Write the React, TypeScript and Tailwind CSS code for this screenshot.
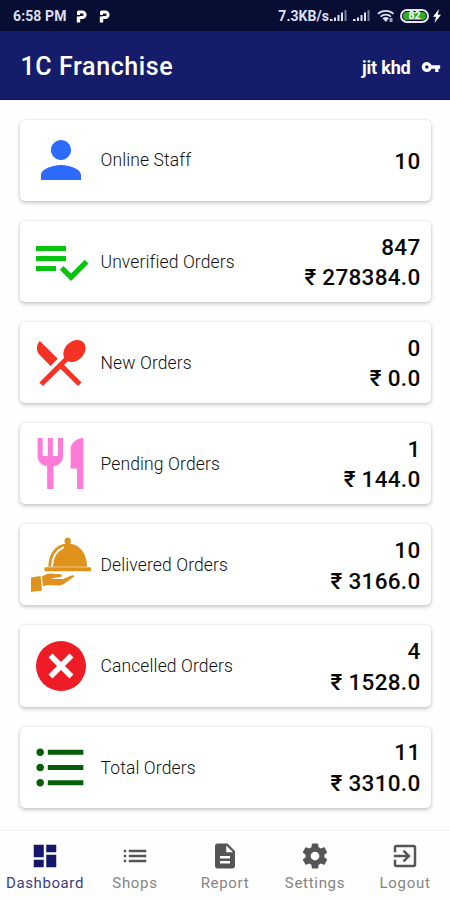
import React from "react";

const PATHS = {
  person: "M12 12c2.21 0 4-1.79 4-4s-1.79-4-4-4-4 1.79-4 4 1.79 4 4 4zm0 2c-2.67 0-8 1.34-8 4v2h16v-2c0-2.66-5.33-4-8-4z",
  check: "M14 10H2v2h12v-2zm0-4H2v2h12V6zM2 16h8v-2H2v2zm19.5-4.5L23 13l-6.99 7-4.51-4.5L13 14l3.01 3 5.49-5.5z",
  menu: "M8.1 13.34l2.83-2.83L3.91 3.5c-1.56 1.56-1.56 4.09 0 5.66l4.19 4.18zm6.78-1.81c1.53.71 3.68.21 5.27-1.38 1.91-1.91 2.28-4.65.81-6.12-1.46-1.46-4.2-1.1-6.12.81-1.59 1.59-2.09 3.74-1.38 5.27L3.7 19.87l1.41 1.41L12 14.41l6.88 6.88 1.41-1.41L13.41 13l1.47-1.47z",
  restaurant: "M11 9H9V2H7v7H5V2H3v7c0 2.12 1.66 3.84 3.75 3.97V22h2.5v-9.03C11.34 12.84 13 11.12 13 9V2h-2v7zm5-3v8h2.5v8H21V2c-2.76 0-5 2.24-5 4z",
  bullets: "M4 10.5c-.83 0-1.5.67-1.5 1.5s.67 1.5 1.5 1.5 1.5-.67 1.5-1.5-.67-1.5-1.5-1.5zm0-6c-.83 0-1.5.67-1.5 1.5S3.17 7.5 4 7.5 5.5 6.83 5.5 6 4.83 4.5 4 4.5zm0 12c-.83 0-1.5.68-1.5 1.5s.68 1.5 1.5 1.5 1.5-.68 1.5-1.5-.67-1.5-1.5-1.5zM7 19h14v-2H7v2zm0-6h14v-2H7v2zm0-8v2h14V5H7z",
  dashboard: "M3 13h8V3H3v10zm0 8h8v-6H3v6zm10 0h8V11h-8v10zm0-18v6h8V3h-8z",
  list: "M3 13h2v-2H3v2zm0 4h2v-2H3v2zm0-8h2V7H3v2zm4 4h14v-2H7v2zm0 4h14v-2H7v2zM7 7v2h14V7H7z",
  report: "M14 2H6c-1.1 0-1.99.9-1.99 2L4 20c0 1.1.89 2 1.99 2H18c1.1 0 2-.9 2-2V8l-6-6zm2 16H8v-2h8v2zm0-4H8v-2h8v2zm-3-5V3.5L18.5 9H13z",
  settings: "M19.43 12.98c.04-.32.07-.64.07-.98s-.03-.66-.07-.98l2.11-1.65c.19-.15.24-.42.12-.64l-2-3.46c-.12-.22-.39-.3-.61-.22l-2.49 1c-.52-.4-1.08-.73-1.69-.98l-.38-2.65C14.46 2.18 14.25 2 14 2h-4c-.25 0-.46.18-.49.42l-.38 2.65c-.61.25-1.17.59-1.69.98l-2.49-1c-.23-.09-.49 0-.61.22l-2 3.46c-.13.22-.07.49.12.64l2.11 1.65c-.04.32-.07.65-.07.98s.03.66.07.98l-2.11 1.65c-.19.15-.24.42-.12.64l2 3.46c.12.22.39.3.61.22l2.49-1c.52.4 1.08.73 1.69.98l.38 2.65c.03.24.24.42.49.42h4c.25 0 .46-.18.49-.42l.38-2.65c.61-.25 1.17-.59 1.69-.98l2.49 1c.23.09.49 0 .61-.22l2-3.46c.12-.22.07-.49-.12-.64l-2.11-1.65zM12 15.5c-1.93 0-3.5-1.57-3.5-3.5s1.57-3.5 3.5-3.5 3.5 1.57 3.5 3.5-1.57 3.5-3.5 3.5z",
  exit: "M10.09 15.59L11.5 17l5-5-5-5-1.41 1.41L12.67 11H3v2h9.67l-2.58 2.59zM19 3H5c-1.11 0-2 .9-2 2v4h2V5h14v14H5v-4H3v4c0 1.1.89 2 2 2h14c1.1 0 2-.9 2-2V5c0-1.1-.9-2-2-2z",
  key: "M12.65 10C11.83 7.67 9.61 6 7 6c-3.31 0-6 2.69-6 6s2.69 6 6 6c2.61 0 4.83-1.67 5.65-4H17v4h4v-4h2v-4H12.65zM7 14c-1.1 0-2-.9-2-2s.9-2 2-2 2 .9 2 2-.9 2-2 2z",
};

function Icon({ path, className }: { path: string; className: string }) {
  return (
    <svg viewBox="0 0 24 24" fill="currentColor" className={className}>
      <path d={path} />
    </svg>
  );
}

function ServingIcon() {
  return (
    <svg viewBox="0 0 60 60" fill="#e0921c" className="size-[60px]">
      <circle cx="36.7" cy="6" r="3.2" />
      <path d="M17.4 31.8C17.4 18 25.5 8.6 36.7 8.6S56 18 56 31.8Z" />
      <path d="M21 31C21.4 22 25.4 15.6 32 12.6" fill="none" stroke="#fff" strokeWidth="2" strokeLinecap="round" />
      <rect x="13.5" y="32.2" width="46.5" height="4" rx="1" />
      <path d="M0 42.4l9.6-1.4 1.4 14.4L0 57Z" />
      <path d="M11 41.4c4-3 9-3.6 13-2.3l5-.2c2.3.2 2.3 2.6.2 3.2l-8 1.2v.8l11-.2 8.3-3.4c2-.8 3.6.2 2.1 1.6l-9.9 7c-1.5 1.1-3 1.4-5.4 1.3l-11-.3-4.5 1.2Z" />
    </svg>
  );
}

function CancelIcon() {
  return (
    <svg viewBox="0 0 60 60" className="size-[60px]">
      <circle cx="30" cy="30" r="25" fill="#ee1c25" />
      <path d="M19.5 19.5l21 21M40.5 19.5l-21 21" stroke="#fff" strokeWidth="5.6" />
    </svg>
  );
}

function ParkedIcon() {
  return (
    <svg viewBox="0 0 12 14" className="h-[14px] w-[12px]" fill="none" stroke="#fff">
      <path d="M2.5 13.5V7.5" strokeWidth="3.4" />
      <path d="M2.5 6V3h3.8a2.6 2.6 0 0 1 0 5.6H3.5" strokeWidth="3" strokeLinejoin="round" />
    </svg>
  );
}

function Signal() {
  return (
    <svg viewBox="0 0 17 12" className="h-[12px] w-[17px]">
      <path d="M0 9h2.5v2H0zM4 7.5h2V11H4zM7.5 5h2v6h-2zM11 2.5h2V11h-2z" fill="#dfe3f3" />
      <path d="M14.5 0h2v11h-2z" fill="#777c9b" />
    </svg>
  );
}

function StatusBar() {
  return (
    <div className="flex h-[31px] items-center bg-[#080d34] pl-[13px] pr-[9px] pt-px text-white">
      <span className="text-[14px] font-bold leading-none tracking-[0.1px] text-[#dcdff0]">6:58 PM</span>
      <div className="ml-[9px] flex gap-[11px]">
        <ParkedIcon />
        <ParkedIcon />
      </div>
      <span className="ml-auto text-[14px] font-bold leading-none tracking-[0.05px] text-[#dcdff0]">7.3KB/s</span>
      <div className="ml-[1px] flex gap-[6px]">
        <Signal />
        <Signal />
      </div>
      <svg viewBox="0 0 18 14" className="ml-[7px] h-[14px] w-[18px]" fill="none" stroke="#dfe3f3">
        <path d="M1 4.8c4.3-4 11.2-4 15.5 0M3.6 7.6c3-2.7 7.4-2.7 10.4 0" strokeWidth="1.7" />
        <path d="M5.5 9.2q3.2-2.3 6.4 0L8.8 13Z" fill="#dfe3f3" stroke="none" />
        <path d="M12.5 9h3v4h-3z" fill="#9a9fb9" stroke="none" />
      </svg>
      <div className="ml-[5px] flex h-[14px] w-[29px] items-center rounded-full border-2 border-[#e4e7ee] p-[1px]">
        <div className="flex h-full w-full items-center justify-center rounded-full bg-[#2fae1e] text-[10.5px] font-bold leading-none">82</div>
      </div>
      <svg viewBox="0 0 8 14" className="ml-[4px] h-[14px] w-[8px]" fill="#fff">
        <path d="M6 0L0 7.8h3L1.5 14 8 5.8H4.8Z" />
      </svg>
    </div>
  );
}

const CARDS: { label: string; values: string[]; icon: React.ReactNode }[] = [
  { label: "Online Staff", values: ["10"], icon: <Icon path={PATHS.person} className="size-[60px] text-[#2d6bff]" /> },
  { label: "Unverified Orders", values: ["847", "₹ 278384.0"], icon: <Icon path={PATHS.check} className="size-[60px] text-[#07c50c]" /> },
  { label: "New Orders", values: ["0", "₹ 0.0"], icon: <Icon path={PATHS.menu} className="size-[61px] text-[#f43324]" /> },
  { label: "Pending Orders", values: ["1", "₹ 144.0"], icon: <Icon path={PATHS.restaurant} className="size-[61px] text-[#ff7bd8]" /> },
  { label: "Delivered Orders", values: ["10", "₹ 3166.0"], icon: <ServingIcon /> },
  { label: "Cancelled Orders", values: ["4", "₹ 1528.0"], icon: <CancelIcon /> },
  { label: "Total Orders", values: ["11", "₹ 3310.0"], icon: <Icon path={PATHS.bullets} className="size-[61px] text-[#075e0a]" /> },
];

const TABS = [
  { label: "Dashboard", path: PATHS.dashboard, active: true },
  { label: "Shops", path: PATHS.list, active: false },
  { label: "Report", path: PATHS.report, active: false },
  { label: "Settings", path: PATHS.settings, active: false },
  { label: "Logout", path: PATHS.exit, active: false },
];

export default function App() {
  return (
    <div className="flex h-[900px] w-[450px] flex-col overflow-hidden bg-[#fefefe] font-[Roboto,'Noto_Sans',sans-serif]">
      <StatusBar />
      <header className="flex h-[69px] items-center justify-between border-b border-[#0d1453] bg-[#151d6b] pl-[20.5px] pr-[9.5px] pt-[4px] text-white">
        <h1 className="text-[25px] font-medium tracking-[0.6px]">1C Franchise</h1>
        <div className="flex items-center gap-[10px]">
          <span className="text-[18px] font-bold tracking-[-0.2px]">jit khd</span>
          <Icon path={PATHS.key} className="size-[20px]" />
        </div>
      </header>
      <main className="flex flex-1 flex-col gap-[20px] pl-[20px] pr-[19px] pt-[19.5px]">
        {CARDS.map((c) => (
          <section
            key={c.label}
            className="flex h-[81.2px] shrink-0 items-center rounded-[5px] bg-white pl-[10px] pr-[10.5px] shadow-[0_2px_4px_rgba(0,0,0,0.2),0_0_3px_rgba(0,0,0,0.1)]"
          >
            <div className="flex w-[61px] justify-center">{c.icon}</div>
            <span className="ml-[9.5px] pt-[1px] text-[17.5px] font-light tracking-[0.12px] text-[#111]">{c.label}</span>
            <div className="ml-auto pt-[1.5px] text-right text-[22.5px] font-medium leading-[30.5px] tracking-[0.3px] text-[#080808]">
              {c.values.map((v) => (
                <div key={v}>{v}</div>
              ))}
            </div>
          </section>
        ))}
      </main>
      <nav className="grid h-[70px] grid-cols-5 border-t border-[#f3f3f3] bg-[#fefefe]">
        {TABS.map((t) => (
          <div
            key={t.label}
            className={
              t.active
                ? "flex flex-col items-center pt-[9.5px] text-[#15176a]"
                : "flex flex-col items-center pt-[9.5px] text-[#555]"
            }
          >
            <Icon path={t.path} className="size-[30px]" />
            <span
              className={
                t.active
                  ? "mt-[2.5px] text-[15px] leading-[20px] tracking-[0.6px] text-[#3b3d85]"
                  : "mt-[2.5px] text-[15px] leading-[20px] tracking-[0.7px] text-[#858585]"
              }
            >
              {t.label}
            </span>
          </div>
        ))}
      </nav>
    </div>
  );
}
